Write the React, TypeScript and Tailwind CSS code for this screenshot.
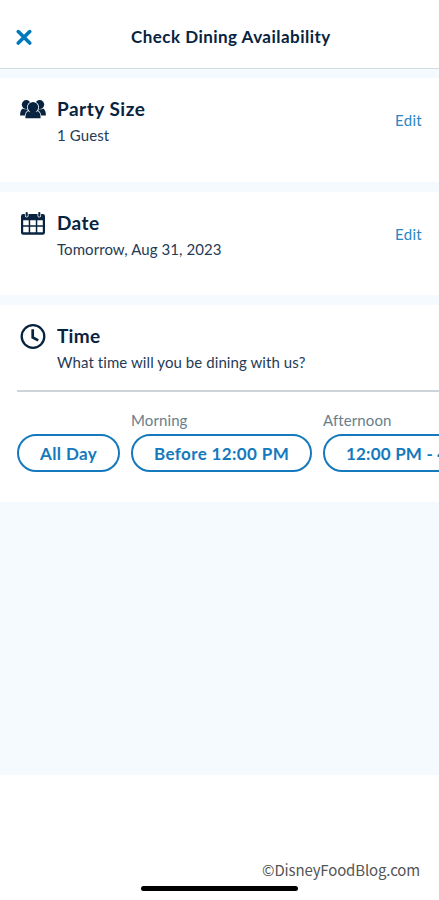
import type { ReactNode } from 'react'
import clsx from 'clsx'

interface SectionProps {
  icon: ReactNode
  title: string
  detail: string
  titleClass?: string
  detailClass?: string
  editable?: boolean
}

const TIMES = [
  { label: '', range: 'All Day', width: 'w-[103px]', textClass: 'tracking-[0.4px]' },
  { label: 'Morning', range: 'Before 12:00 PM', width: 'w-[181px]', textClass: 'tracking-[0.38px]' },
  { label: 'Afternoon', range: '12:00 PM - 4:30 PM', width: 'w-[206px]', textClass: 'tracking-[0.2px]' },
]

function CloseIcon() {
  return (
    <svg width="16" height="16" viewBox="0 0 16 16" fill="none" stroke="#0078bd" strokeWidth="3.6" strokeLinecap="round">
      <path d="M2.3 2.6 13.7 14M13.7 2.6 2.3 14" />
    </svg>
  )
}

function PartyIcon() {
  return (
    <svg width="26" height="26" viewBox="0 0 26 26" fill="#07233f">
      <circle cx="6.3" cy="8.6" r="4.5" />
      <circle cx="19.7" cy="8.6" r="4.5" />
      <path d="M.1 19.5c0-3.700.9-6.200 2.800-7.100 1.800 1.200 3.900 1.200 6.100 0v7.100zM25.900 19.500c0-3.700-.9-6.200-2.800-7.100-1.800 1.200-3.900 1.200-6.100 0v7.100z" />
      <g stroke="#fff" strokeWidth="1.5" paintOrder="stroke">
        <path d="M5.400 22.200c0-4.200 1.200-6.900 3.900-7.400h7.400c2.700.5 3.900 3.200 3.900 7.400z" />
      </g>
      <circle cx="13" cy="11.200" r="6" fill="#fff" />
      <circle cx="13" cy="11.200" r="5.200" />
      <path d="M9.500 15.300h7l-1 2.500h-5z" />
    </svg>
  )
}

function CalendarIcon() {
  return (
    <svg width="26" height="26" viewBox="0 0 26 26" fill="none">
      <rect x="1" y="4" width="24" height="20.700" rx="2.200" fill="#07233f" />
      <path
        fill="#fff"
        d="M3.200 10.200h5.500v5H3.200zM10.200 10.200h5.600v5h-5.600zM17.300 10.200h5.500v5h-5.500zM3.200 16.700h5.500v5.600H3.200zM10.200 16.700h5.600v5.600h-5.600zM17.300 16.700h5.500v5.600h-5.500z"
      />
      <path d="M6.700 3v2.700M19.300 3v2.700" stroke="#fff" strokeWidth="3.600" strokeLinecap="round" />
      <path d="M6.700 3v2.700M19.300 3v2.700" stroke="#07233f" strokeWidth="2.100" strokeLinecap="round" />
    </svg>
  )
}

function ClockIcon() {
  return (
    <svg width="26" height="26" viewBox="0 0 26 26" fill="none" stroke="#07233f">
      <circle cx="13" cy="13.500" r="11.300" strokeWidth="2.300" />
      <path d="M12.700 6.200v8.200l5.500 3" strokeWidth="2.700" />
    </svg>
  )
}

function Section({ icon, title, detail, titleClass, detailClass, editable }: SectionProps) {
  return (
    <div className="flex items-start pl-5 pr-[17px]">
      <div className="mt-[18px] w-[37px] shrink-0">{icon}</div>
      <div className="flex-1">
        <h2 className={clsx('mt-[19px] whitespace-nowrap text-[19px] font-bold leading-6', titleClass)}>{title}</h2>
        <p className={clsx('mt-1 whitespace-nowrap text-[15px] leading-5 text-[#253b56]', detailClass)}>{detail}</p>
      </div>
      {editable && (
        <button type="button" className="mt-8 text-[15px] leading-5 tracking-[0.3px] text-[#2a86c4]">
          Edit
        </button>
      )}
    </div>
  )
}

export default function App() {
  return (
    <div className="flex h-[900px] w-[439px] flex-col overflow-hidden bg-white font-['Lato','Open_Sans',sans-serif] text-[#07233f]">
      <header className="flex h-[69px] shrink-0 items-center border-b border-[#cfdde3] pl-4 pt-1.5">
        <button type="button" aria-label="Close" className="w-[115px]">
          <CloseIcon />
        </button>
        <h1 className="whitespace-nowrap text-[17px] font-bold leading-6 tracking-[0.47px]">Check Dining Availability</h1>
      </header>

      <main className="flex h-[706px] shrink-0 flex-col bg-[#f4fafd] pt-[9px]">
        <section className="h-[104px] shrink-0 bg-white">
          <Section icon={<PartyIcon />} title="Party Size" detail="1 Guest" titleClass="tracking-[0.5px]" detailClass="tracking-[0.1px]" editable />
        </section>
        <section className="mt-[10px] h-[103px] shrink-0 bg-white">
          <Section icon={<CalendarIcon />} title="Date" detail="Tomorrow, Aug 31, 2023" titleClass="tracking-[0.4px]" detailClass="tracking-[0.07px]" editable />
        </section>
        <section className="mt-[10px] h-[197px] shrink-0 overflow-hidden bg-white">
          <Section icon={<ClockIcon />} title="Time" detail="What time will you be dining with us?" titleClass="tracking-[0.3px]" detailClass="tracking-[0.08px]" />
          <div className="ml-[17px] mt-[18px] h-[1.5px] bg-[#cdd5da]" />
          <div className="mt-[18px] flex gap-[11px] pl-[17px]">
            {TIMES.map(time => (
              <div key={time.range} className="shrink-0">
                <div className="h-6 whitespace-nowrap text-[15px] leading-5 tracking-[0.1px] text-[#687e8b]">{time.label}</div>
                <button
                  type="button"
                  className={clsx(
                    'h-[38px] whitespace-nowrap rounded-full border-2 border-[#1479bd] pl-[21px] pt-0.5 text-left text-[17px] font-bold text-[#1479bd]',
                    time.width,
                    time.textClass
                  )}
                >
                  {time.range}
                </button>
              </div>
            ))}
          </div>
        </section>
      </main>

      <footer className="flex flex-1 flex-col pt-[83px]">
        <p className="self-end pr-[19px] font-['Noto_Sans_CJK_SC',sans-serif] text-[15px] leading-6 tracking-[-0.15px] text-[#555]">©DisneyFoodBlog.com</p>
        <div className="ml-[141px] mt-1 h-[5px] w-[157px] rounded-full bg-black" />
      </footer>
    </div>
  )
}
